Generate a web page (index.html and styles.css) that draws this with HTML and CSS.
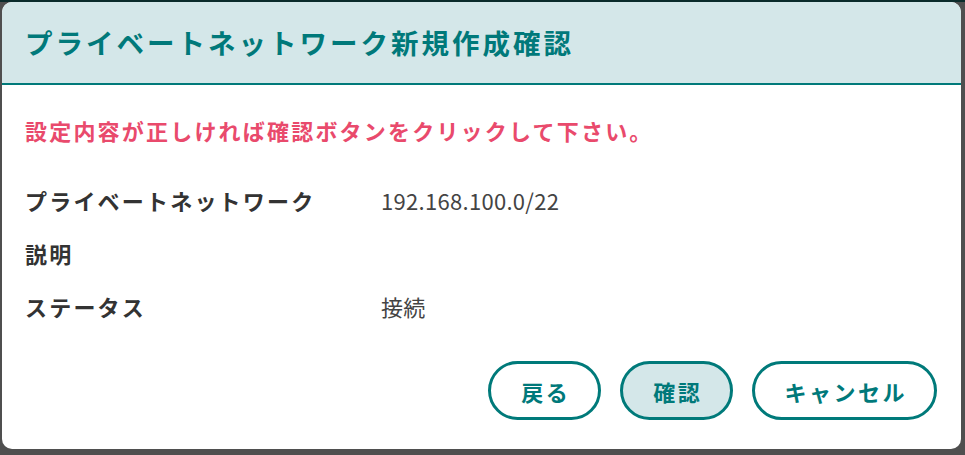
FILE: index.html
```html
<!DOCTYPE html>
<html lang="ja">
<head>
<meta charset="utf-8">
<title>プライベートネットワーク新規作成確認</title>
<link rel="stylesheet" href="styles.css">
</head>
<body>
<div class="dialog">
  <div class="dialog-header">
    <h1 class="dialog-title">プライベートネットワーク新規作成確認</h1>
  </div>
  <div class="dialog-body">
    <p class="notice">設定内容が正しければ確認ボタンをクリックして下さい。</p>
    <div class="details">
      <div class="row"><div class="label">プライベートネットワーク</div><div class="value">192.168.100.0/22</div></div>
      <div class="row"><div class="label">説明</div><div class="value"></div></div>
      <div class="row"><div class="label">ステータス</div><div class="value">接続</div></div>
    </div>
    <div class="actions">
      <button class="btn btn-short">戻る</button>
      <button class="btn btn-short btn-primary">確認</button>
      <button class="btn btn-long">キャンセル</button>
    </div>
  </div>
</div>
</body>
</html>
```
FILE: styles.css
```css
html, body {
  margin: 0;
  padding: 0;
}
body {
  width: 965px;
  height: 455px;
  overflow: hidden;
  background: linear-gradient(#0a2b2b 0 2px, #4f4f4f 2px);
  font-family: "Noto Sans CJK JP", "Noto Sans", sans-serif;
  padding-top: 2px;
  padding-left: 2px;
  box-sizing: border-box;
}
.dialog {
  width: 959px;
  height: 447px;
  background: #ffffff;
  border-radius: 10px;
  overflow: hidden;
  display: flex;
  flex-direction: column;
}
.dialog-header {
  height: 81px;
  background: #d4e7e9;
  border-bottom: 2px solid #007a7a;
  display: flex;
  align-items: center;
  padding-left: 23px;
  flex-shrink: 0;
}
.dialog-title {
  margin: 0;
  font-size: 27.5px;
  font-weight: 700;
  color: #00797a;
  line-height: 1;
  letter-spacing: 3px;
}
.dialog-body {
  padding: 0 24px 0 23px;
  display: flex;
  flex-direction: column;
  flex: 1;
}
.notice {
  margin: 29px 0 0;
  font-size: 22px;
  line-height: 32px;
  font-weight: 700;
  color: #e94a6c;
  letter-spacing: 2.2px;
}
.details {
  margin-top: 27px;
  display: flex;
  flex-direction: column;
}
.row {
  display: flex;
  height: 53px;
  align-items: center;
}
.label {
  width: 356px;
  flex-shrink: 0;
  font-size: 22px;
  font-weight: 700;
  color: #333333;
  letter-spacing: 2.2px;
}
.value {
  font-size: 22px;
  color: #444444;
  letter-spacing: 0.3px;
}
.actions {
  margin-top: 29px;
  display: flex;
  justify-content: flex-end;
  gap: 19px;
}
.btn {
  height: 59px;
  border: 3px solid #007a7a;
  border-radius: 30px;
  background: #ffffff;
  color: #00797a;
  font-family: "Noto Sans CJK JP", "Noto Sans", sans-serif;
  font-size: 22px;
  font-weight: 700;
  letter-spacing: 2.5px;
  padding: 0 0 0 2.5px;
  box-sizing: border-box;
}
.btn-short {
  width: 113px;
}
.btn-long {
  width: 185px;
}
.btn-primary {
  background: #d4e7e9;
}
```
